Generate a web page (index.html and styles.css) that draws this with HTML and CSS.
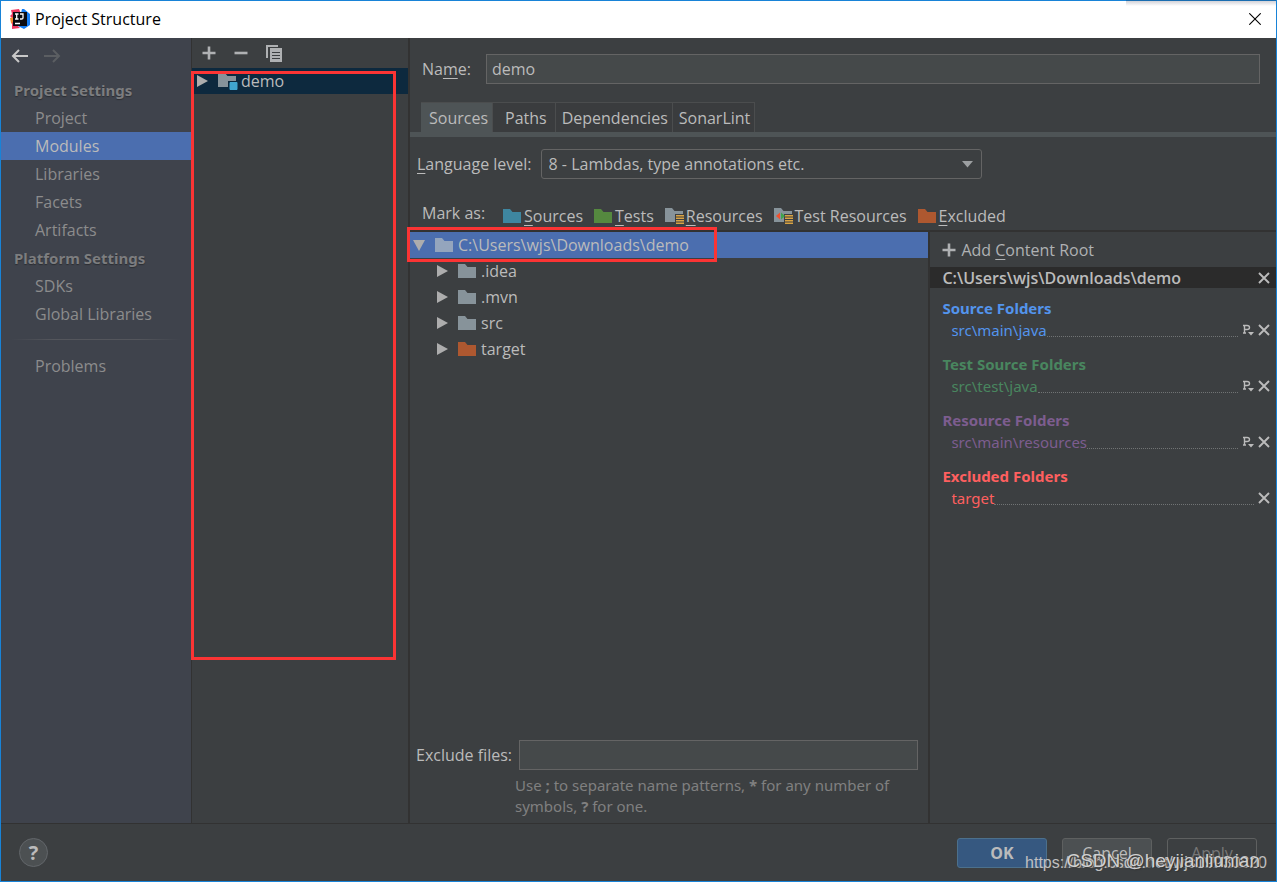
FILE: index.html
```html
<!DOCTYPE html>
<html lang="en">
<head>
<meta charset="utf-8">
<title>Project Structure</title>
<link rel="stylesheet" href="styles.css">
</head>
<body>
<svg class="defs" aria-hidden="true">
  <symbol id="folder" viewBox="0 0 18 14"><path d="M0 0h7l2.500 3H18v11H0z" fill="currentColor"/></symbol>
  <symbol id="lines" viewBox="0 0 8 9"><path d="M0 0h8v1.500H0zM0 2.500h8V4H0zM0 5h8v1.500H0zM0 7.500h8V9H0z" fill="#d9a343"/></symbol>
  <symbol id="right" viewBox="0 0 11 12"><path d="M0 0l11 6-11 6z" fill="currentColor"/></symbol>
  <symbol id="down" viewBox="0 0 12 11"><path d="M0 0h12L6 11z" fill="currentColor"/></symbol>
  <symbol id="cross" viewBox="0 0 12 12"><path d="M1 1l10 10M11 1L1 11" stroke="currentColor" stroke-width="1.900" fill="none"/></symbol>
  <symbol id="plus" viewBox="0 0 14 14"><path d="M7 .5v13M.5 7h13" stroke="currentColor" stroke-width="2.600" fill="none"/></symbol>
  <symbol id="prefix" viewBox="0 0 12 12"><path d="M2.500 9V1.500H5Q7.500 1.500 7.500 3.500T5 5.500H2.500M1 1.500h2M1 9h3" stroke="currentColor" stroke-width="1.400" fill="none"/><path d="M6 8h6L9 11.500z" fill="currentColor"/></symbol>
</svg>
<div class="window">
  <header class="titlebar">
    <svg class="logo" viewBox="0 0 20 20" width="20" height="20"><path d="M1 1l8-1 3 7-9 7-2-3 1-2-2-2 2-2z" fill="#f0385f"/><path d="M0 9l4-1v9l-3-3z" fill="#f98c2b"/><path d="M2 13l5 3 3 3-8 1z" fill="#f0385f"/><path d="M12 0h2l6 5v11l-6 4-6-3z" fill="#147df5"/><path d="M3 3h14v14H3z" fill="#0b0b10"/><path d="M5 5h3.500M6.700 5v5M5 10h3.500M10 5h3v4q0 1-1.500 1H10M5 14.500h5" stroke="#fff" stroke-width="1.300" fill="none"/></svg>
    <h1 class="title">Project Structure</h1>
    <button class="close" aria-label="Close"><svg viewBox="0 0 12 12" width="12" height="12"><path d="M.3.3l11.400 11.400M11.700.3L.3 11.700" stroke="#000" stroke-width="1.100"/></svg></button>
    <span class="top-shade"></span>
  </header>
  <main class="content">
    <nav class="sidebar">
      <div class="history">
        <button class="plain" aria-label="Back"><svg viewBox="0 0 17 14" width="17" height="14"><path d="M8 1L2 7l6 6M2 7h15" stroke="#c8c8c8" stroke-width="2" fill="none"/></svg></button>
        <button class="plain" aria-label="Forward" disabled><svg viewBox="0 0 17 14" width="17" height="14"><path d="M9 1l6 6-6 6M15 7H0" stroke="#5b5e62" stroke-width="2" fill="none"/></svg></button>
      </div>
      <h2 class="nav-heading">Project Settings</h2>
      <a class="nav-item" href="#">Project</a>
      <a class="nav-item nav-item-active" href="#">Modules</a>
      <a class="nav-item" href="#">Libraries</a>
      <a class="nav-item" href="#">Facets</a>
      <a class="nav-item" href="#">Artifacts</a>
      <h2 class="nav-heading">Platform Settings</h2>
      <a class="nav-item" href="#">SDKs</a>
      <a class="nav-item" href="#">Global Libraries</a>
      <hr class="nav-rule">
      <a class="nav-item" href="#">Problems</a>
    </nav>
    <section class="modules">
      <div class="toolbar">
        <button class="plain" aria-label="Add"><svg width="14" height="14"><use href="#plus"/></svg></button>
        <button class="plain" aria-label="Remove"><svg viewBox="0 0 14 14" width="14" height="14"><path d="M.5 7h13" stroke="currentColor" stroke-width="2.600"/></svg></button>
        <button class="plain" aria-label="Copy"><svg viewBox="0 0 16 17" width="16" height="17"><path d="M0 0h12v2H2v11H0z" fill="currentColor"/><path d="M4 3h12v14H4z" fill="currentColor"/><path d="M6 7.500h8M6 10.500h8M6 13.500h8" stroke="#3c3f41" stroke-width="1.200"/></svg></button>
      </div>
      <div class="module-row">
        <svg class="caret" width="11" height="12"><use href="#right"/></svg>
        <svg class="module-icon" viewBox="0 0 20 18" width="20" height="18"><path d="M0 1h7l2.500 3H18v11H0z" fill="#87939a"/><path d="M10 9h10v9H10z" fill="#0d293e"/><path d="M12 10.500h7v7h-7z" fill="#40a6d0" stroke="#40a6d0"/></svg>
        <span>demo</span>
      </div>
      <span class="mark mark-modules"></span>
    </section>
    <section class="editor">
      <div class="name-row">
        <label class="name-label" for="name">Na<u>m</u>e:</label>
        <input class="field name-input" id="name" value="demo">
      </div>
      <div class="tabs" role="tablist">
        <button class="tab tab-active" role="tab">Sources</button>
        <button class="tab tab-wide" role="tab">Paths</button>
        <button class="tab" role="tab">Dependencies</button>
        <button class="tab" role="tab">SonarLint</button>
      </div>
      <div class="level-row">
        <label for="level"><u>L</u>anguage level:</label>
        <div class="select-wrap">
          <select class="select" id="level"><option>8 - Lambdas, type annotations etc.</option></select>
          <svg class="select-caret" viewBox="0 0 11 7" width="11" height="7"><path d="M0 0h11L5.500 6.500z" fill="#9c9fa1"/></svg>
        </div>
      </div>
      <div class="mark-row">
        <span class="mark-label">Mark as:</span>
        <button class="mark-as"><svg class="c-source" width="18" height="14"><use href="#folder"/></svg><span><u>S</u>ources</span></button>
        <button class="mark-as"><svg class="c-test" width="18" height="14"><use href="#folder"/></svg><span><u>T</u>ests</span></button>
        <button class="mark-as mark-as-badge"><svg class="c-plain" viewBox="0 0 20 16" width="20" height="16"><path d="M0 0h7l2.500 3H18v3h-8v8H0z" fill="currentColor"/><use href="#lines" x="11" y="7" width="8" height="9"/></svg><span><u>R</u>esources</span></button>
        <button class="mark-as mark-as-badge"><svg class="c-plain" viewBox="0 0 20 16" width="20" height="16"><path d="M0 0h7l2.500 3H18v3h-8v8H0z" fill="currentColor"/><path d="M6 4.500v7L2 8z" fill="#f0502e"/><path d="M7 4.500L11 8l-4 3.500z" fill="#3da44d"/><use href="#lines" x="11" y="7" width="8" height="9"/></svg><span>Test Resources</span></button>
        <button class="mark-as"><svg class="c-excluded" width="18" height="14"><use href="#folder"/></svg><span><u>E</u>xcluded</span></button>
      </div>
      <div class="split">
        <div class="tree-pane">
          <div class="tree" role="tree">
            <div class="tree-row tree-root" role="treeitem"><svg width="12" height="11"><use href="#down"/></svg><svg class="c-root" width="18" height="14"><use href="#folder"/></svg><span>C:\Users\wjs\Downloads\demo</span></div>
            <div class="tree-row" role="treeitem"><svg width="11" height="12"><use href="#right"/></svg><svg class="c-plain" width="18" height="14"><use href="#folder"/></svg><span>.idea</span></div>
            <div class="tree-row" role="treeitem"><svg width="11" height="12"><use href="#right"/></svg><svg class="c-plain" width="18" height="14"><use href="#folder"/></svg><span>.mvn</span></div>
            <div class="tree-row" role="treeitem"><svg width="11" height="12"><use href="#right"/></svg><svg class="c-plain" width="18" height="14"><use href="#folder"/></svg><span>src</span></div>
            <div class="tree-row" role="treeitem"><svg width="11" height="12"><use href="#right"/></svg><svg class="c-excluded" width="18" height="14"><use href="#folder"/></svg><span>target</span></div>
            <span class="mark mark-root"></span>
          </div>
          <div class="exclude-row">
            <label for="exclude">Exclude files:</label>
            <input class="field exclude-input" id="exclude">
          </div>
          <p class="hint">Use <b>;</b> to separate name patterns, <b>*</b> for any number of symbols, <b>?</b> for one.</p>
        </div>
        <aside class="roots">
          <button class="add-root"><svg width="14" height="14"><use href="#plus"/></svg><span>Add <u>C</u>ontent Root</span></button>
          <div class="root-head"><span>C:\Users\wjs\Downloads\demo</span><button class="plain" aria-label="Remove root"><svg width="12" height="12"><use href="#cross"/></svg></button></div>
          <div class="group group-source">
            <h3 class="group-title">Source Folders</h3>
            <div class="path"><span>src\main\java</span><i class="dots"></i><button class="plain" aria-label="Edit prefix"><svg width="12" height="12"><use href="#prefix"/></svg></button><button class="plain" aria-label="Remove"><svg width="12" height="12"><use href="#cross"/></svg></button></div>
          </div>
          <div class="group group-test">
            <h3 class="group-title">Test Source Folders</h3>
            <div class="path"><span>src\test\java</span><i class="dots"></i><button class="plain" aria-label="Edit prefix"><svg width="12" height="12"><use href="#prefix"/></svg></button><button class="plain" aria-label="Remove"><svg width="12" height="12"><use href="#cross"/></svg></button></div>
          </div>
          <div class="group group-resource">
            <h3 class="group-title">Resource Folders</h3>
            <div class="path"><span>src\main\resources</span><i class="dots"></i><button class="plain" aria-label="Edit prefix"><svg width="12" height="12"><use href="#prefix"/></svg></button><button class="plain" aria-label="Remove"><svg width="12" height="12"><use href="#cross"/></svg></button></div>
          </div>
          <div class="group group-excluded">
            <h3 class="group-title">Excluded Folders</h3>
            <div class="path"><span>target</span><i class="dots"></i><button class="plain" aria-label="Remove"><svg width="12" height="12"><use href="#cross"/></svg></button></div>
          </div>
        </aside>
      </div>
    </section>
  </main>
  <footer class="footer">
    <button class="help" aria-label="Help">?</button>
    <button class="btn btn-primary">OK</button>
    <button class="btn">Cancel</button>
    <button class="btn btn-disabled" disabled>Apply</button>
    <span class="watermark watermark-url">https://blog.csdn.net/wjs19930820</span>
    <span class="watermark watermark-user">CSDN @heyjianliunian</span>
  </footer>
</div>
</body>
</html>
```
FILE: styles.css
```css
* { box-sizing: border-box; }

body {
  margin: 0;
  background: #3c3f41;
  color: #bbbbbb;
  font-family: "Open Sans", "Noto Sans", sans-serif;
  font-size: 16px;
  line-height: 22px;
}

button, input, select { font: inherit; color: inherit; }
button { padding: 0; border: 0; background: none; }
svg { display: block; flex: none; }
h1, h2, h3, p { margin: 0; font-size: inherit; }
u { text-decoration-thickness: 1px; text-underline-offset: 3px; text-decoration-skip-ink: none; }
.defs { position: absolute; width: 0; height: 0; }
.plain { display: flex; }

.nav-heading, .group-title, .path, .hint {
  font-family: "Noto Sans", "Open Sans", sans-serif;
  font-size: 15px;
}

.window {
  display: flex;
  flex-direction: column;
  min-height: 100vh;
  border: 1px solid #1883d7;
}

.titlebar {
  position: relative;
  display: flex;
  align-items: center;
  gap: 5px;
  height: 37px;
  padding: 0 15px 2px 9px;
  background: #fff;
  color: #000;
}
.title { flex: 1; font-weight: 400; }
.close { display: flex; }
.top-shade {
  position: absolute;
  top: -1px;
  right: 0;
  width: 150px;
  height: 6px;
  border-top: 1px solid #1a6db0;
  background: linear-gradient(#d2d2d8, #fff);
}

.content { display: flex; flex: 1; }

.sidebar {
  width: 191px;
  border-right: 1px solid #323232;
  background: #3f434c;
  color: #8c8c8c;
}
.history { display: flex; gap: 16px; height: 38px; padding: 11px 10px 0; }
.nav-heading {
  padding-left: 13px;
  color: #7c7d7f;
  font-weight: 700;
  line-height: 28px;
  text-shadow: 0 1px 1px #2c2e33;
}
.nav-item {
  display: block;
  padding-left: 34px;
  color: inherit;
  line-height: 28px;
  text-decoration: none;
}
.nav-item-active { background: #4b6eaf; color: #bbbbbb; }
.nav-rule {
  height: 1px;
  margin: 11px 10px 12px;
  border: 0;
  background: linear-gradient(90deg, transparent, #54565c 25%, #54565c 75%, transparent);
}

.modules { position: relative; width: 218px; border-right: 2px solid #323232; }
.toolbar { display: flex; align-items: center; gap: 18px; height: 30px; padding-left: 10px; color: #afb1b3; }
.module-row { display: flex; align-items: center; height: 26px; padding-left: 5px; background: #0d293e; }
.caret { margin-right: 10px; color: #adadad; }
.module-icon { margin-right: 3px; }

.mark { position: absolute; border: 3px solid #fb3434; }
.mark-modules { top: 33px; left: -1px; width: 205px; height: 589px; }
.mark-root { top: -5px; left: -3px; width: 310px; height: 35px; }

.editor { display: flex; flex: 1; flex-direction: column; min-width: 0; }
.field { height: 30px; border: 1px solid #646464; background: #45494a; padding: 0 5px; }
.name-row { display: flex; align-items: center; padding: 16px 16px 18px 12px; }
.name-label { width: 64px; }
.name-input { flex: 1; min-width: 0; }

.tabs { display: flex; padding-left: 11px; border-bottom: 5px solid #4e5456; }
.tab {
  height: 30px;
  padding: 0 4px 0 6px;
  border: 1px solid #4b4d4e;
  border-width: 1px 1px 0 0;
  background: #3a3c3e;
}
.tab-wide { padding: 0 8px 0 12px; }
.tab-active { padding: 0 4px 0 8px; background: #4e5456; }

.level-row { display: flex; align-items: center; gap: 9px; padding: 12px 7px; }
.select-wrap { position: relative; width: 441px; }
.select {
  width: 100%;
  height: 30px;
  padding: 0 7px;
  border: 1px solid #646464;
  border-radius: 3px;
  background: #3c3f41;
  appearance: none;
}
.select-caret { position: absolute; top: 12px; right: 9px; }

.mark-row { display: flex; align-items: center; height: 39px; padding: 11px 12px 0; }
.mark-label { align-self: flex-start; width: 81px; }
.mark-as { display: flex; align-items: center; gap: 3px; margin-right: 11px; }
.mark-as-badge { gap: 1px; }
.c-source { color: #3e86a0; }
.c-test { color: #55893f; }
.c-plain { color: #87939a; }
.c-root { color: #94a5bd; }
.c-excluded { color: #ae5830; }

.split { display: flex; flex: 1; border-top: 2px solid #323232; }
.tree-pane { display: flex; flex: 3; flex-direction: column; min-width: 0; }
.tree { position: relative; flex: 1; }
.tree-row { display: flex; align-items: center; height: 26px; padding-left: 27px; }
.tree-row svg { margin-right: 5px; color: #adadad; }
.tree-row svg:first-child { margin-right: 10px; }
.tree-row .c-plain { color: #87939a; }
.tree-row .c-excluded { color: #ae5830; }
.tree-root { padding-left: 3px; background: #4b6eaf; }
.tree-root .c-root { color: #94a5bd; }
.exclude-row { display: flex; align-items: center; gap: 7px; padding: 0 10px 0 6px; }
.exclude-input { flex: 1; min-width: 0; }
.hint { padding: 5px 10px 6px 105px; color: #808080; line-height: 21px; }

.roots { flex: 2; border-left: 2px solid #323232; }
.add-root { display: flex; align-items: center; gap: 5px; height: 35px; padding-left: 12px; color: #afb1b3; }
.root-head {
  display: flex;
  align-items: center;
  justify-content: space-between;
  height: 21px;
  margin-bottom: 9px;
  padding: 0 6px 0 12px;
  background: #2b2b2b;
  font-weight: 600;
}
.group { margin-bottom: 12px; padding: 0 6px 0 12px; }
.group-title { font-weight: 700; }
.path { display: flex; align-items: center; gap: 4px; padding-left: 9px; }
.path .plain { color: #bbbbbb; }
.dots { flex: 1; height: 14px; margin-left: -4px; border-bottom: 1px dotted #707374; }
.group-source { color: #5394ec; }
.group-test { color: #49865f; }
.group-resource { color: #7d5d8f; }
.group-excluded { color: #ff5f5f; }

.footer {
  position: relative;
  display: flex;
  align-items: center;
  gap: 15px;
  height: 58px;
  padding: 0 19px 0 18px;
  border-top: 1px solid #323232;
}
.help {
  width: 29px;
  height: 29px;
  margin-right: auto;
  border: 1px solid #62666a;
  border-radius: 50%;
  background: #4c5052;
  font-size: 20px;
  font-weight: 700;
}
.btn { width: 90px; height: 30px; border: 1px solid #5e6060; border-radius: 3px; background: #4c5052; }
.btn-primary { border-color: #4c708c; background: #365880; font-weight: 700; }
.btn-disabled { background: #3c3f41; color: #777777; }

.watermark { position: absolute; font-family: "Liberation Sans", sans-serif; white-space: nowrap; }
.watermark-url { right: 9px; bottom: 7px; color: #c0c0c0; font-size: 16px; }
.watermark-user { right: 16px; bottom: 9px; color: #d0d0d0; font-size: 19px; text-shadow: 1px 1px 1px #333; }
```
